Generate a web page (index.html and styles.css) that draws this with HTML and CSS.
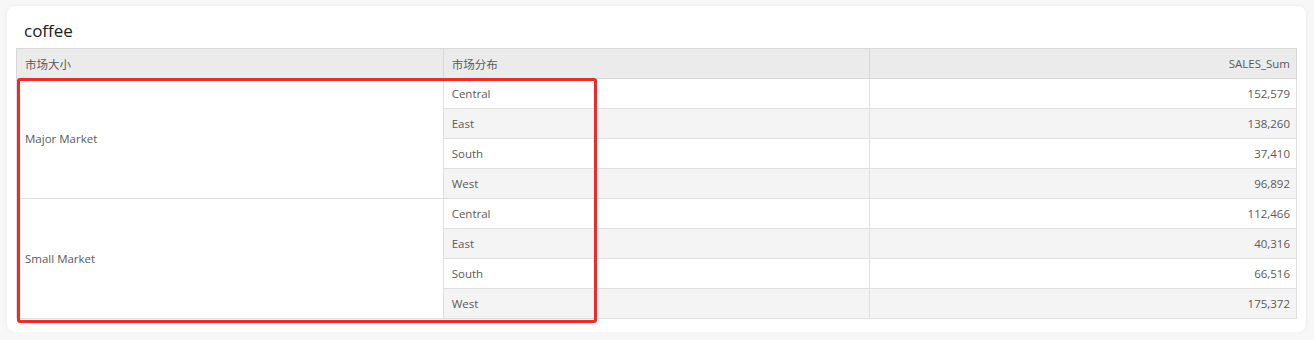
FILE: index.html
```html
<!DOCTYPE html>
<html lang="zh">
<head>
<meta charset="utf-8">
<link rel="stylesheet" href="styles.css">
</head>
<body>
<div class="card">
  <div class="title">coffee</div>
  <div class="table-wrap">
    <table class="pivot">
      <thead>
        <tr><th>市场大小</th><th>市场分布</th><th class="num">SALES_Sum</th></tr>
      </thead>
      <tbody>
        <tr><td class="group" rowspan="4">Major Market</td><td>Central</td><td class="num">152,579</td></tr>
        <tr class="alt"><td>East</td><td class="num">138,260</td></tr>
        <tr><td>South</td><td class="num">37,410</td></tr>
        <tr class="alt"><td>West</td><td class="num">96,892</td></tr>
        <tr><td class="group" rowspan="4">Small Market</td><td>Central</td><td class="num">112,466</td></tr>
        <tr class="alt"><td>East</td><td class="num">40,316</td></tr>
        <tr><td>South</td><td class="num">66,516</td></tr>
        <tr class="alt"><td>West</td><td class="num">175,372</td></tr>
      </tbody>
    </table>
    <div class="highlight"></div>
  </div>
</div>
</body>
</html>
```
FILE: styles.css
```css
html, body {
  margin: 0;
  padding: 0;
  background: #f7f7f7;
}
body {
  font-family: "Open Sans", "Noto Sans CJK SC", sans-serif;
  color: #555;
}
.card {
  margin: 6px 8px 0 7px;
  height: 326px;
  box-sizing: border-box;
  background: #fff;
  border-radius: 8px;
  box-shadow: 0 0 4px rgba(0,0,0,0.06);
  padding: 0 9px 14px 9px;
}
.title {
  height: 42px;
  box-sizing: border-box;
  padding: 15px 0 0 8px;
  font-size: 17px;
  line-height: 20px;
  color: #222;
}
.table-wrap {
  position: relative;
}
.pivot {
  width: 100%;
  table-layout: fixed;
  border-collapse: collapse;
  font-size: 11.5px;
}
.pivot th, .pivot td {
  height: 29px;
  padding: 0 6px 0 8px;
  border: 1px solid #e0e0e0;
  text-align: left;
  font-weight: normal;
  color: #5a5a5a;
  white-space: nowrap;
}
.pivot th {
  background: #ebebeb;
  border-color: #d8d8d8;
}
.pivot tr.alt td {
  background: #f4f4f4;
}
.pivot td.group {
  background: #fff;
}
.pivot .num {
  text-align: right;
}
.highlight {
  position: absolute;
  left: 1px;
  top: 30px;
  width: 574px;
  height: 239px;
  border: 3px solid #ee2b24;
  border-radius: 3px;
}
```
